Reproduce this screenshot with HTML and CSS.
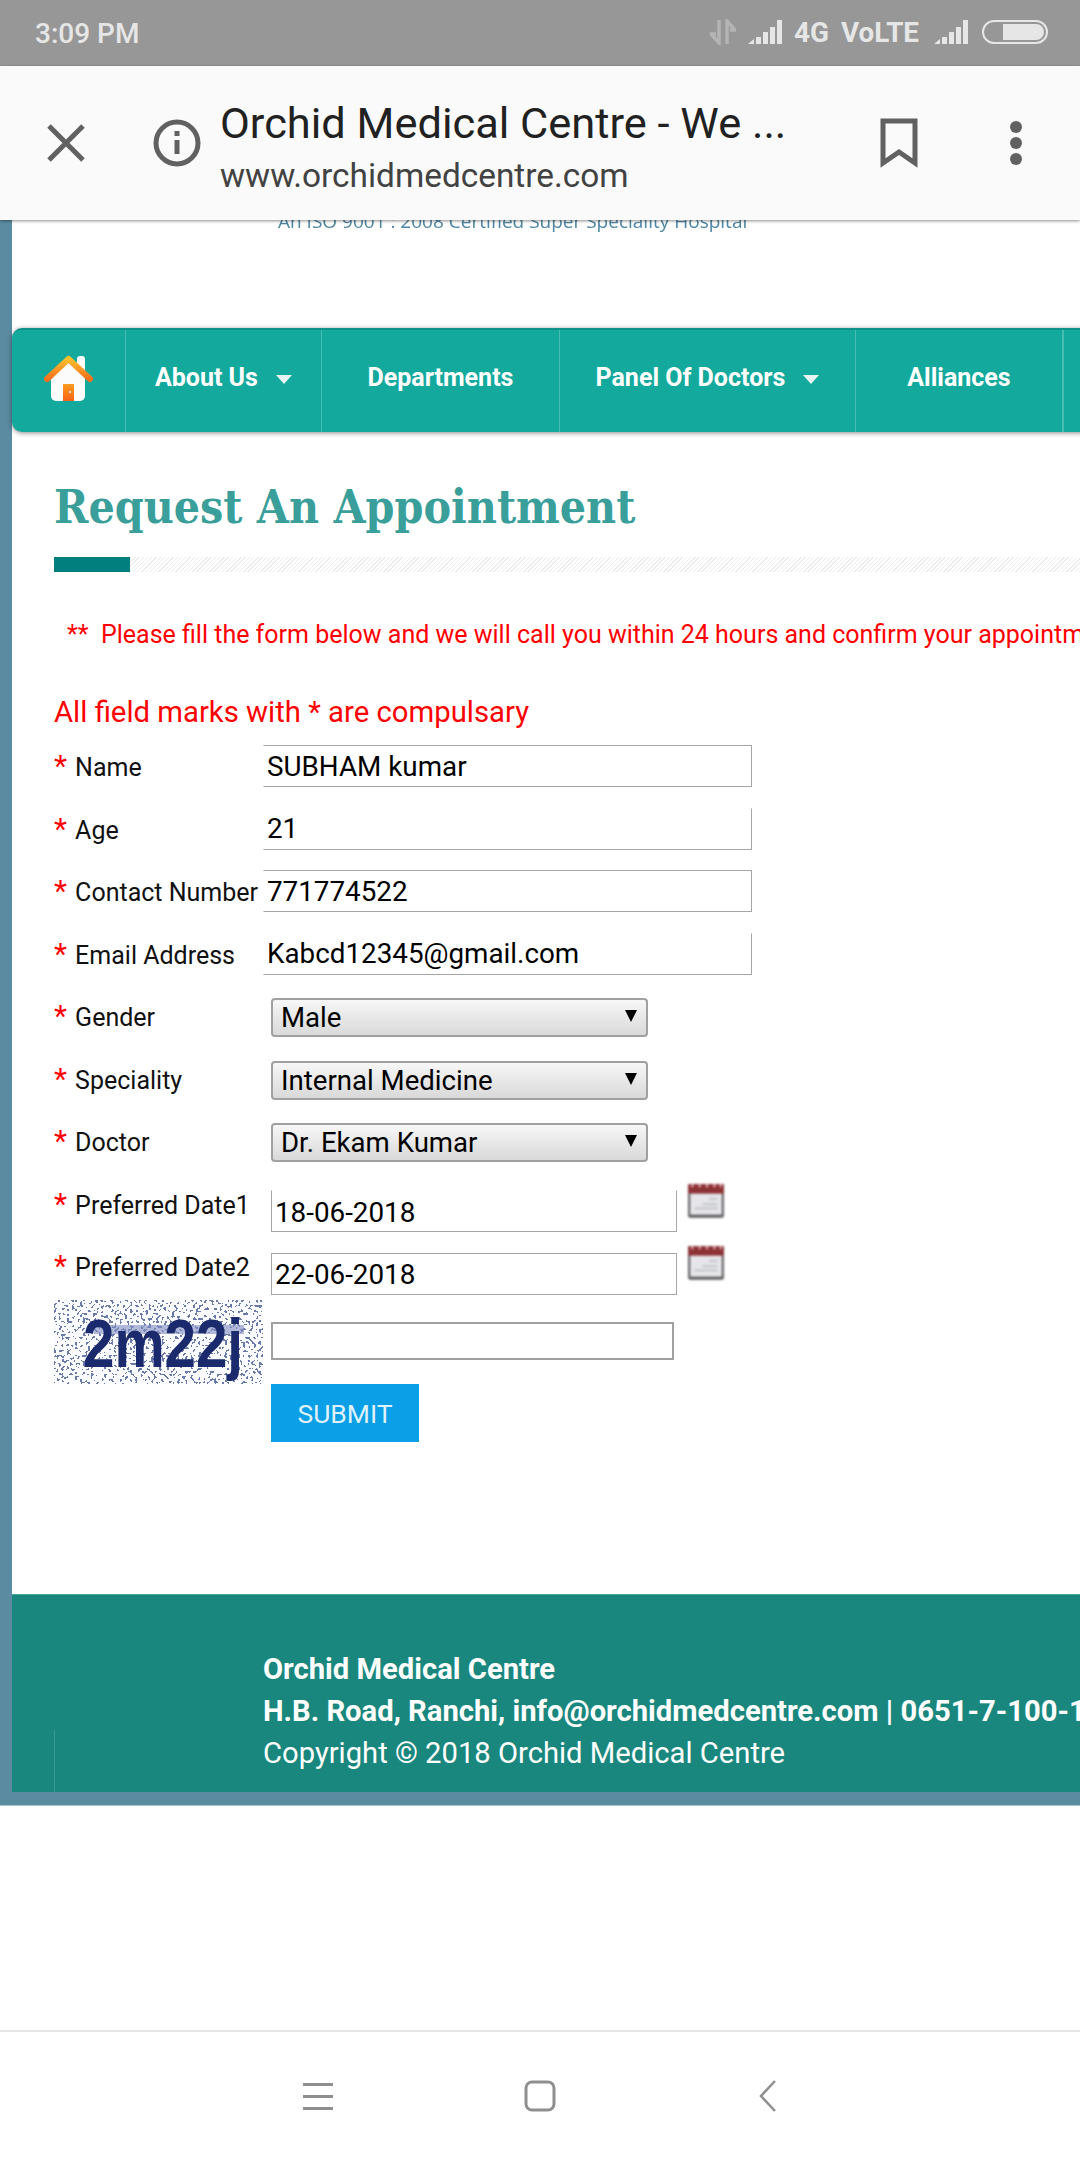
FILE: index.html
```html
<!DOCTYPE html>
<html lang="en">
  <head>
    <meta charset="UTF-8" />
    <meta name="viewport" content="width=device-width, initial-scale=1.0" />
    <title>Orchid Medical Centre</title>
    <link rel="stylesheet" href="styles.css">
  </head>
  <body>
    <div class="status-bar">
      <span class="status-time">3:09 PM</span>
      <div class="status-icons">
        <svg class="data-arrows" width="26" height="26" viewBox="0 0 26 26">
          <path d="M9 1v23L1 15h5" fill="none" stroke="#b4b4b4" stroke-width="3.5"/>
          <path d="M17 25V2l8 9h-5" fill="none" stroke="#b4b4b4" stroke-width="3.5"/>
        </svg>
        <svg width="34" height="24" viewBox="0 0 34 24">
          <path d="M0 24l6-5v5zM8 24v-7h5v7zM15 24v-12h5v12zM22 24v-17h5v17zM29 24v-24h5v24z" fill="#e6e6e6"/>
        </svg>
        <span class="status-net">4G</span>
        <span class="status-net volte">VoLTE</span>
        <svg width="34" height="24" viewBox="0 0 34 24">
          <path d="M0 24l6-5v5zM8 24v-7h5v7zM15 24v-12h5v12zM22 24v-17h5v17zM29 24v-24h5v24z" fill="#e6e6e6"/>
        </svg>
        <svg class="battery" width="66" height="24" viewBox="0 0 66 24">
          <rect x="1" y="1" width="64" height="22" rx="11" fill="none" stroke="#e6e6e6" stroke-width="2"/>
          <path d="M21 4h33a8 8 0 0 1 0 16h-33z" fill="#e6e6e6"/>
        </svg>
      </div>
    </div>

    <div class="browser-bar">
      <svg class="close-icon" width="38" height="38" viewBox="0 0 38 38">
        <path d="M2 2l34 34M36 2L2 36" stroke="#616161" stroke-width="5" fill="none"/>
      </svg>
      <svg class="info-icon" width="48" height="48" viewBox="0 0 48 48">
        <circle cx="24" cy="24" r="21" stroke="#616161" stroke-width="5" fill="none"/>
        <rect x="21.500" y="21" width="5" height="14" fill="#616161"/>
        <rect x="21.500" y="12" width="5" height="5" fill="#616161"/>
      </svg>
      <div class="browser-title">
        <div class="page-name">Orchid Medical Centre - We ...</div>
        <div class="page-url">www.orchidmedcentre.com</div>
      </div>
      <svg class="bookmark-icon" width="38" height="50" viewBox="0 0 38 50">
        <path d="M3 3h32v42L19 34 3 45z" stroke="#616161" stroke-width="5" fill="none"/>
      </svg>
      <svg class="menu-icon" width="12" height="50" viewBox="0 0 12 50">
        <circle cx="6" cy="9" r="6" fill="#616161"/>
        <circle cx="6" cy="25" r="6" fill="#616161"/>
        <circle cx="6" cy="41" r="6" fill="#616161"/>
      </svg>
    </div>

    <div class="site">
      <div class="site-inner">
        <div class="logo-strip">
          <div class="logo-tagline">An ISO 9001 : 2008 Certified Super Speciality Hospital</div>
        </div>

        <div class="main-nav">
          <a class="nav-item nav-home">
            <svg width="49" height="47" viewBox="0 0 49 47">
              <defs>
                <linearGradient id="roof" x1="0" y1="0" x2="0" y2="1">
                  <stop offset="0" stop-color="#fdc12b"/>
                  <stop offset="1" stop-color="#f96f1c"/>
                </linearGradient>
                <linearGradient id="door" x1="0" y1="0" x2="0" y2="1">
                  <stop offset="0" stop-color="#fb9a20"/>
                  <stop offset="1" stop-color="#f96315"/>
                </linearGradient>
              </defs>
              <rect x="33" y="1" width="8" height="20" rx="3" fill="#fdfdfd"/>
              <path d="M7 22L24 7l17 15v19a5 5 0 0 1-5 5H12a5 5 0 0 1-5-5z" fill="#fbfbfb"/>
              <path d="M3 24L24.500 4 46 24" fill="none" stroke="url(#roof)" stroke-width="6" stroke-linecap="round" stroke-linejoin="round"/>
              <rect x="19" y="29" width="11" height="17" fill="url(#door)"/>
              <circle cx="26" cy="37" r="1" fill="#fff"/>
            </svg>
          </a>
          <a class="nav-item nav-about">About Us <span class="nav-caret"></span></a>
          <a class="nav-item nav-departments">Departments</a>
          <a class="nav-item nav-panel">Panel Of Doctors <span class="nav-caret"></span></a>
          <a class="nav-item nav-alliances">Alliances</a>
          <a class="nav-item nav-last"></a>
        </div>

        <div class="content">
          <h1 class="page-heading">Request An Appointment</h1>
          <div class="heading-rule"><span class="heading-rule-mark"></span></div>

          <p class="notice">**&nbsp; Please fill the form below and we will call you within 24 hours and confirm your appointment</p>
          <p class="required-note">All field marks with * are compulsary</p>

          <form class="appointment-form">
            <div class="form-row">
              <label class="form-label"><span class="star">*</span> Name</label>
              <input class="text-field no-left" type="text" value="SUBHAM kumar">
            </div>
            <div class="form-row">
              <label class="form-label"><span class="star">*</span> Age</label>
              <input class="text-field no-left no-top" type="text" value="21">
            </div>
            <div class="form-row">
              <label class="form-label"><span class="star">*</span> Contact Number</label>
              <input class="text-field no-left" type="text" value="771774522">
            </div>
            <div class="form-row">
              <label class="form-label"><span class="star">*</span> Email Address</label>
              <input class="text-field no-left no-top" type="text" value="Kabcd12345@gmail.com">
            </div>
            <div class="form-row">
              <label class="form-label"><span class="star">*</span> Gender</label>
              <div class="select-wrap">
                <select class="select-field"><option>Male</option></select>
              </div>
            </div>
            <div class="form-row">
              <label class="form-label"><span class="star">*</span> Speciality</label>
              <div class="select-wrap">
                <select class="select-field"><option>Internal Medicine</option></select>
              </div>
            </div>
            <div class="form-row">
              <label class="form-label"><span class="star">*</span> Doctor</label>
              <div class="select-wrap">
                <select class="select-field"><option>Dr. Ekam Kumar</option></select>
              </div>
            </div>
            <div class="form-row">
              <label class="form-label"><span class="star">*</span> Preferred Date1</label>
              <input class="date-field no-top" type="text" value="18-06-2018">
              <svg class="calendar-icon" width="40" height="40" viewBox="0 0 38 38">
                <rect x="2" y="3" width="34" height="32" rx="2" fill="#5d5d60"/>
                <rect x="4" y="11" width="30" height="21" fill="#e6e6ea"/>
                <rect x="2" y="3" width="34" height="9" fill="#8c3236"/>
                <path d="M6 3v3M13 3v3M20 3v3M27 3v3M33 3v3" stroke="#e8b4b4" stroke-width="2"/>
                <path d="M8 26h22M16 22h14M22 17h8" stroke="#c4c8cc" stroke-width="2"/>
              </svg>
            </div>
            <div class="form-row">
              <label class="form-label"><span class="star">*</span> Preferred Date2</label>
              <input class="date-field" type="text" value="22-06-2018">
              <svg class="calendar-icon" width="40" height="40" viewBox="0 0 38 38">
                <rect x="2" y="3" width="34" height="32" rx="2" fill="#5d5d60"/>
                <rect x="4" y="11" width="30" height="21" fill="#e6e6ea"/>
                <rect x="2" y="3" width="34" height="9" fill="#8c3236"/>
                <path d="M6 3v3M13 3v3M20 3v3M27 3v3M33 3v3" stroke="#e8b4b4" stroke-width="2"/>
                <path d="M8 26h22M16 22h14M22 17h8" stroke="#c4c8cc" stroke-width="2"/>
              </svg>
            </div>
            <div class="captcha-row">
              <svg class="captcha" width="209" height="84" viewBox="0 0 209 84">
                <defs>
                  <filter id="speckle" x="0" y="0" width="100%" height="100%" color-interpolation-filters="sRGB">
                    <feTurbulence type="fractalNoise" baseFrequency="0.38" numOctaves="1" seed="7"/>
                    <feColorMatrix type="matrix" values="0 0 0 0 0.42  0 0 0 0 0.48  0 0 0 0 0.68  0.95 0 0 0 0"/>
                    <feComponentTransfer>
                      <feFuncA type="discrete" tableValues="0 0 0 0 0 0 0 0 0 1 1 1 1 1 1 1"/>
                    </feComponentTransfer>
                  </filter>
                </defs>
                <rect width="209" height="84" fill="#fafbff"/>
                <rect width="209" height="84" filter="url(#speckle)"/>
                <rect x="40" y="25" width="150" height="9" fill="#7f8cc0" opacity="0.6"/>
                <text class="captcha-text" x="29" y="67" textLength="160" lengthAdjust="spacingAndGlyphs">2m22j</text>
              </svg>
              <input class="captcha-field" type="text">
            </div>
            <button class="submit-button" type="button">SUBMIT</button>
          </form>
        </div>

        <div class="site-footer">
          <div class="footer-line footer-bold">Orchid Medical Centre</div>
          <div class="footer-line footer-bold">H.B. Road, Ranchi, info@orchidmedcentre.com | 0651-7-100-100</div>
          <div class="footer-line">Copyright © 2018 Orchid Medical Centre</div>
        </div>
      </div>
    </div>

    <div class="blank-area"></div>

    <div class="bottom-nav">
      <svg width="30" height="28" viewBox="0 0 30 28">
        <path d="M0 2.500h30M0 14.500h30M0 26.500h30" stroke="#8f8f8f" stroke-width="3"/>
      </svg>
      <svg class="nav-square" width="32" height="32" viewBox="0 0 32 32">
        <rect x="2" y="2" width="28" height="28" rx="6" stroke="#8f8f8f" stroke-width="3" fill="none"/>
      </svg>
      <svg class="nav-back" width="18" height="32" viewBox="0 0 18 32">
        <path d="M16 1L2 16l14 15" stroke="#8f8f8f" stroke-width="2.500" fill="none"/>
      </svg>
    </div>
  </body>
</html>
```

FILE: styles.css
```css
* {
  box-sizing: border-box;
}

body {
  font-family: Roboto, Arial, sans-serif;
  background-color: #fff;
  margin: 0;
  padding: 0;
  width: 1080px;
  height: 2160px;
  overflow: hidden;
}

/* status bar */
.status-bar {
  height: 66px;
  background: #979797;
  display: flex;
  align-items: center;
  justify-content: space-between;
  padding: 0 32px 0 35px;
  color: #e6e6e6;
}

.status-time {
  font-size: 28px;
  font-weight: 500;
}

.status-icons {
  display: flex;
  align-items: center;
  gap: 12px;
  margin-top: -2px;
}

.status-net {
  font-size: 27.800px;
  font-weight: 700;
}

.volte {
  margin-right: 3px;
}

.battery {
  margin-left: 2px;
}

/* browser bar */
.browser-bar {
  position: relative;
  z-index: 2;
  height: 154px;
  background: #fafafa;
  box-shadow: 0 1px 3px rgba(0, 0, 0, 0.45);
  display: flex;
  align-items: center;
}

.close-icon {
  margin-left: 47px;
  flex: none;
}

.info-icon {
  margin-left: 68px;
  flex: none;
}

.browser-title {
  margin: 7px 0 0 19px;
  width: 660px;
  color: #212121;
}

.page-name {
  font-size: 43.400px;
  line-height: 58px;
}

.page-url {
  font-size: 33.400px;
  line-height: 46px;
  color: #424242;
}

.bookmark-icon {
  flex: none;
}

.menu-icon {
  margin-left: 92px;
  flex: none;
}

/* page */
.site {
  height: 1586px;
  background: #5b8ba0;
  padding-left: 12px;
  border-bottom: 1px solid #a9c3d0;
  overflow: hidden;
}

.site-inner {
  height: 1572px;
  width: 1068px;
  background: #fff;
  display: flex;
  flex-direction: column;
}

.logo-strip {
  height: 108px;
  flex: none;
}

.logo-tagline {
  margin: -13px 0 0 266px;
  font-family: "Open Sans", Arial, sans-serif;
  font-size: 19px;
  line-height: 28px;
  white-space: nowrap;
  color: #4f86a3;
  filter: blur(0.6px);
}

.main-nav {
  display: flex;
  height: 104px;
  flex: none;
  width: 1100px;
  background: #13a99d;
  border-top: 2px solid #0f9389;
  border-radius: 10px 0 0 10px;
  box-shadow: 0 1px 5px rgba(0, 0, 0, 0.45);
  color: #fff;
  font-size: 25px;
  font-weight: 700;
}

.nav-item {
  display: flex;
  align-items: center;
  justify-content: center;
  padding-bottom: 8px;
  border-right: 1px solid rgba(255, 255, 255, 0.22);
  white-space: pre;
}

.nav-home {
  width: 114px;
  padding: 0 0 6px 0;
}

.nav-about {
  width: 196px;
}

.nav-departments {
  width: 238px;
}

.nav-panel {
  width: 296px;
}

.nav-alliances {
  width: 207px;
}

.nav-caret {
  width: 0;
  height: 0;
  margin: 4px 0 0 12px;
  border-left: 8px solid transparent;
  border-right: 8px solid transparent;
  border-top: 9px solid #e6f5f3;
}

.content {
  flex: 1;
  padding-left: 42px;
}

.page-heading {
  margin: 48px 0 0;
  font-family: "DejaVu Serif Condensed", "DejaVu Serif", serif;
  font-stretch: condensed;
  font-size: 46px;
  line-height: 54px;
  font-weight: 700;
  color: #3a9f9a;
  white-space: nowrap;
}

.heading-rule {
  height: 15px;
  margin-top: 23px;
  width: 1040px;
  background: repeating-linear-gradient(135deg, #ececec 0, #ececec 1px, #fff 1px, #fff 3px);
}

.heading-rule-mark {
  display: block;
  width: 76px;
  height: 15px;
  background: #007f7f;
}

.notice {
  margin: 47px 0 0 13px;
  font-size: 25px;
  line-height: 32px;
  color: #f00;
  white-space: nowrap;
}

.required-note {
  margin: 43px 0 0;
  font-size: 29.300px;
  line-height: 36px;
  color: #f00;
  white-space: nowrap;
}

.appointment-form {
  margin-top: 15px;
}

.form-row {
  display: flex;
  align-items: flex-start;
  height: 62.500px;
}

.form-label {
  flex: none;
  width: 209px;
  font-size: 25px;
  line-height: 46px;
  color: #111;
  white-space: nowrap;
}

.star {
  color: #f00;
  font-size: 30px;
  line-height: 1;
  margin-right: 2px;
}

.text-field,
.date-field {
  height: 42px;
  border: 1.500px solid #a6a6a6;
  border-radius: 0;
  background: #fff;
  font-family: inherit;
  font-size: 27.800px;
  color: #000;
  outline: none;
}

.text-field {
  width: 489px;
  padding: 0 0 0 3px;
}

.date-field {
  width: 406px;
  margin: 7.500px 0 0 8px;
  padding: 2px 0 0 3px;
}

.no-left {
  border-left-color: transparent;
}

.no-top {
  border-top-color: transparent;
}

.select-wrap {
  position: relative;
  width: 377px;
  height: 39px;
  margin: 3px 0 0 8px;
}

.select-wrap::after {
  content: "";
  position: absolute;
  top: 12px;
  right: 11px;
  border-left: 6px solid transparent;
  border-right: 6px solid transparent;
  border-top: 12px solid #000;
}

.select-field {
  width: 100%;
  height: 100%;
  appearance: none;
  -webkit-appearance: none;
  border: 2px solid #a0a0a0;
  border-radius: 4px;
  background: linear-gradient(#f7f7f7, #d9d9d9);
  padding: 0 0 0 8px;
  font-family: inherit;
  font-size: 27.600px;
  color: #000;
}

.calendar-icon {
  margin: -2px 0 0 9px;
  filter: blur(0.8px);
  flex: none;
}

.captcha-row {
  display: flex;
  align-items: flex-start;
  margin-top: -7.500px;
}

.captcha {
  flex: none;
  overflow: visible;
}

.captcha-text {
  font-family: "Liberation Sans", sans-serif;
  font-size: 68px;
  font-weight: 700;
  fill: #1b2a6c;
}

.captcha-field {
  width: 403px;
  height: 38px;
  margin: 22px 0 0 8px;
  border: 2px solid #a0a0a0;
  background: #fff;
  outline: none;
}

.submit-button {
  display: block;
  width: 148px;
  height: 58px;
  margin-left: 217px;
  border: none;
  background: #0a9fe6;
  color: #dff1fb;
  font-family: inherit;
  font-size: 26.500px;
}

.site-footer {
  position: relative;
  flex: none;
  height: 198px;
  padding: 53px 0 0 251px;
  background: #1a877e;
  border-top: 1px solid #4ba6a0;
  color: #fff;
  font-size: 29.200px;
  white-space: nowrap;
}

.site-footer::before {
  content: "";
  position: absolute;
  left: 42px;
  bottom: 0;
  height: 62px;
  border-left: 1px solid rgba(255, 255, 255, 0.15);
}

.footer-line {
  line-height: 42px;
}

.footer-bold {
  font-weight: 700;
}

.blank-area {
  height: 224px;
}

.bottom-nav {
  height: 130px;
  border-top: 2px solid #e6e6e6;
  background: #fff;
  display: flex;
  align-items: center;
  padding-left: 303px;
}

.nav-square {
  margin-left: 191px;
}

.nav-back {
  margin-left: 203px;
}
```
